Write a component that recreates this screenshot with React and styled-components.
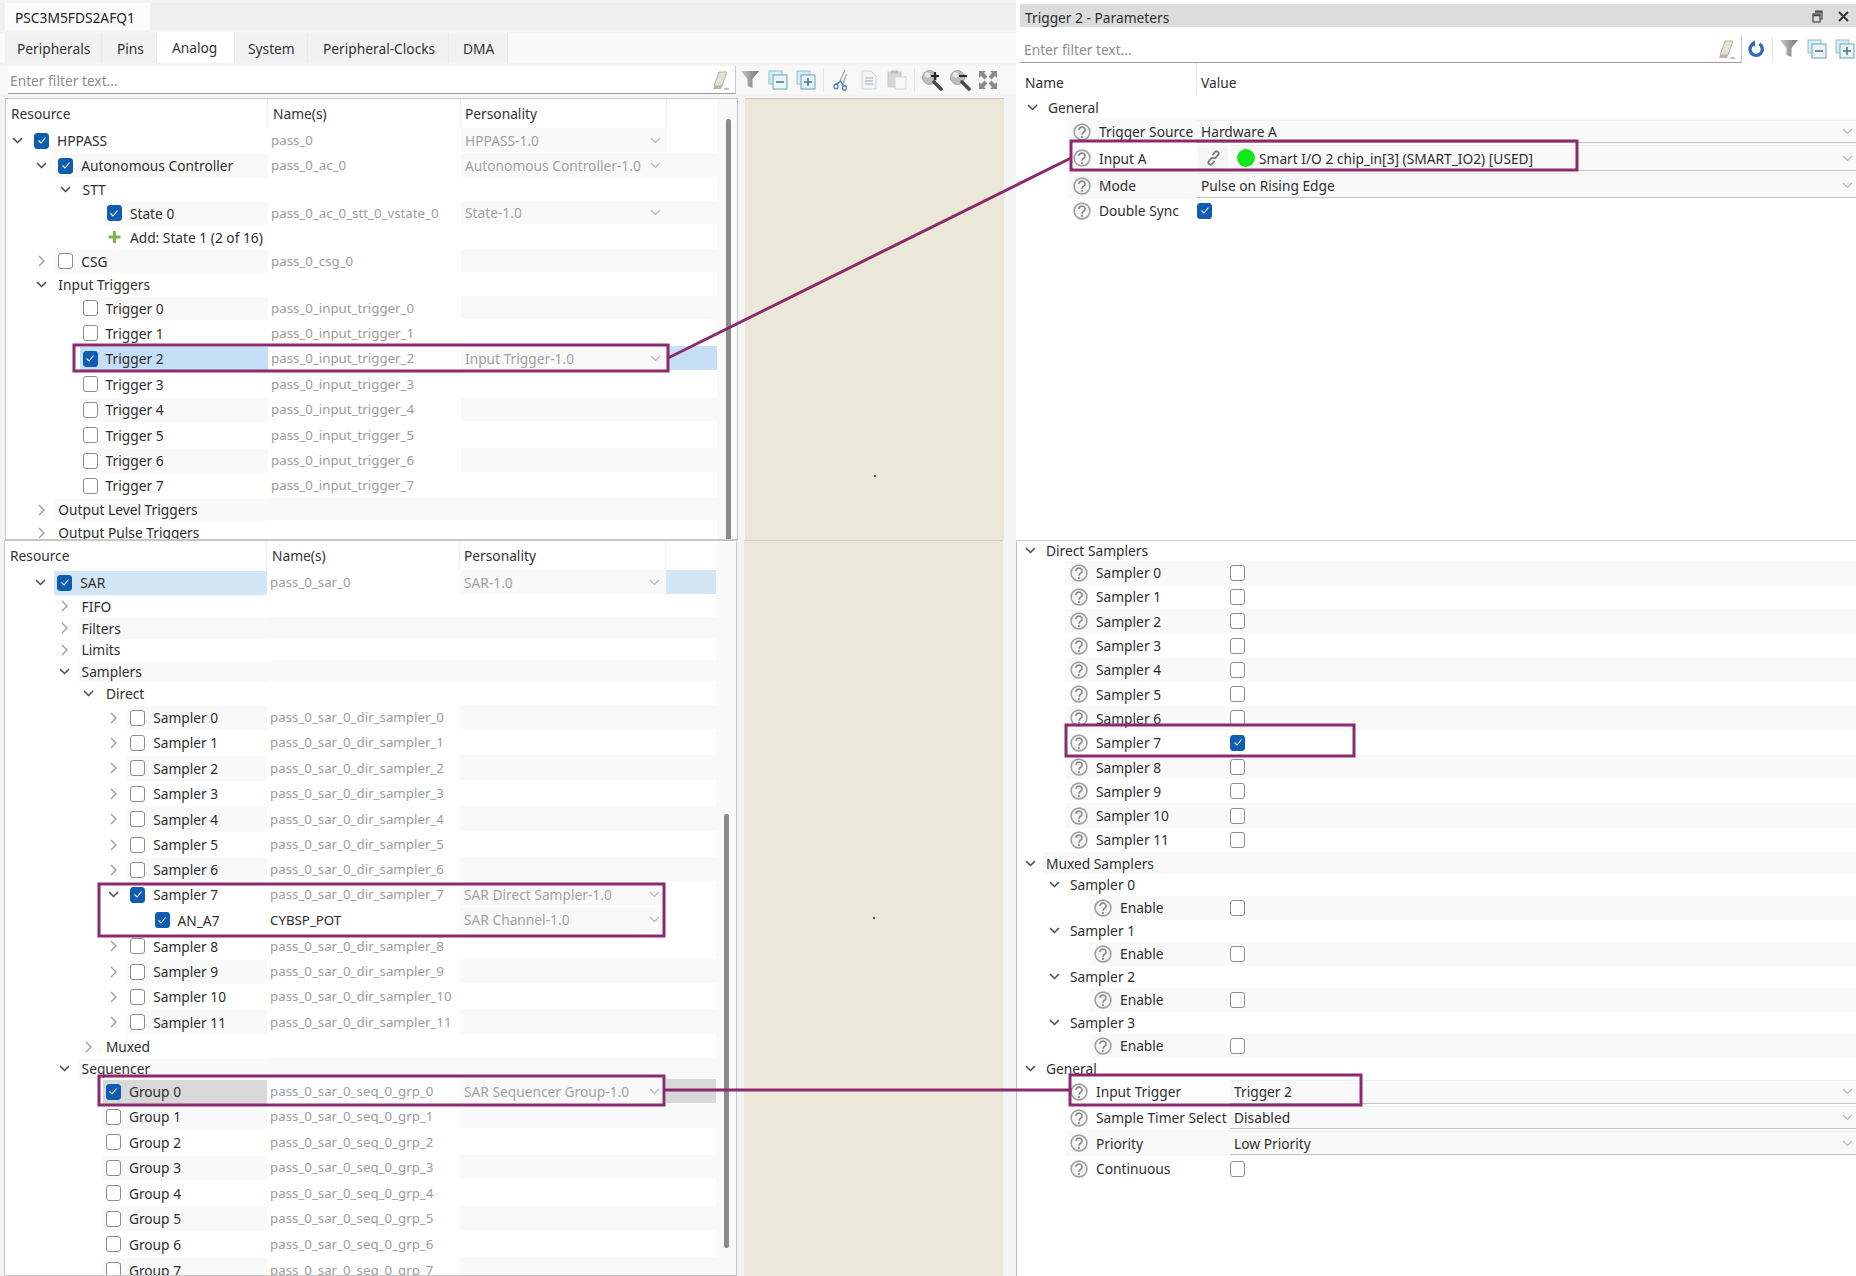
import React from "react";
import styled, { createGlobalStyle } from "styled-components";

const Global = createGlobalStyle`
  html, body { margin: 0; padding: 0; background: #fff; }
  body { font-family: "Noto Sans", "Open Sans", sans-serif; font-size: 13.75px; color: #2e2e2e; }
`;

const Root = styled.div`
  position: relative;
  width: 1856px;
  height: 1276px;
  overflow: hidden;
  display: grid;
  grid-template-columns: 1016px 840px;
  background: #f4f4f4;
`;
const LeftCol = styled.div`
  display: flex;
  flex-direction: column;
  height: 1276px;
  overflow: hidden;
`;
const RightCol = styled.div`
  display: flex;
  flex-direction: column;
  height: 1276px;
  overflow: hidden;
  background: #fff;
`;
const EditorBar = styled.div`
  height: 27px;
  margin-top: 3px;
  background: #efefef;
  display: flex;
  align-items: stretch;
`;
const EditorTab = styled.div`
  width: 145px;
  margin-left: 5px;
  padding: 2px 0 0 10px;
  box-sizing: border-box;
  background: #fbfbfb;
  display: flex;
  align-items: center;
  color: #222;
`;
const TabRow = styled.div`
  height: 30px;
  margin-top: 3px;
  padding-left: 5px;
  display: flex;
  background: #fafafa;
`;
const Tab = styled.div`
  width: ${(p) => p.$w}px;
  box-sizing: border-box;
  padding-left: ${(p) => p.$pad}px;
  display: flex;
  align-items: center;
  background: ${(p) => (p.$active ? "#ffffff" : "#f2f2f2")};
  border-right: 1px solid #eaeaea;
  color: #333;
  margin-top: ${(p) => (p.$active ? "-1px" : "0")};
`;
const Toolbar = styled.div`
  height: 28px;
  margin-top: 3px;
  display: flex;
  align-items: center;
  background: #f8f8f8;
`;
const FilterBox = styled.div`
  box-sizing: border-box;
  width: ${(p) => p.$w}px;
  margin-left: ${(p) => p.$ml}px;
  flex: none;
  height: 28px;
  background: #fff;
  border-bottom: 1px solid #9a9a9a;
  border-right: 1px solid #c8c8c8;
  padding: 2px 5px 0 ${(p) => p.$pad}px;
  display: flex;
  align-items: center;
  justify-content: space-between;
  color: #8c8c8c;
`;
const IconSlot = styled.div`
  width: 28px;
  height: 24px;
  flex: none;
  display: flex;
  align-items: center;
  justify-content: center;
`;
const Sep = styled.div`
  width: 1px;
  height: 24px;
  margin: 0 ${(p) => p.$m}px;
  background: #e4e4e4;
  flex: none;
`;
const Split = styled.div`
  display: grid;
  grid-template-columns: ${(p) => p.$left}px 259px;
  column-gap: ${(p) => p.$gap}px;
  height: ${(p) => p.$h}px;
  margin-left: ${(p) => p.$ml}px;
  margin-top: ${(p) => p.$mt}px;
  overflow: hidden;
`;
const TablePane = styled.div`
  background: #fff;
  border: 1px solid #c6c6c6;
  box-sizing: border-box;
  display: flex;
  overflow: hidden;
`;
const TableBody = styled.div`
  width: 711px;
  flex: none;
`;
const HeaderRow = styled.div`
  display: grid;
  grid-template-columns: 262px 193px 206px 50px;
  height: 29px;
  align-items: center;
  color: #333;
`;
const HeaderCell = styled.div`
  height: 100%;
  display: flex;
  align-items: center;
  padding-left: ${(p) => p.$pad}px;
  box-sizing: border-box;
  border-right: 1px solid #efefef;
`;
const ScrollTrack = styled.div`
  flex: 1;
  background: #f9f9f9;
  padding-left: ${(p) => p.$pad}px;
`;
const ScrollThumb = styled.div`
  width: 5px;
  height: ${(p) => p.$h}px;
  margin-top: ${(p) => p.$top}px;
  background: #8b8b8b;
  border-radius: 2px;
`;
const Row = styled.div`
  display: grid;
  grid-template-columns: 262px 193px 206px 50px;
  height: ${(p) => p.$h}px;
`;
const TreeCell = styled.div`
  display: flex;
  align-items: center;
  padding-left: ${(p) => 3 + p.$level * 24.3}px;
  height: 100%;
  min-width: 0;
  white-space: nowrap;
`;
const Twisty = styled.div`
  width: 16px;
  height: 100%;
  flex: none;
  margin-right: 6px;
  display: flex;
  align-items: center;
  justify-content: center;
`;
const LabelBand = styled.div`
  flex: 1;
  height: calc(100% - 1px);
  display: flex;
  align-items: center;
  gap: 8px;
  padding-left: 3px;
  min-width: 0;
  background: ${(p) => p.$bg};
  color: #2e2e2e;
`;
const NameCell = styled.div`
  display: flex;
  align-items: center;
  height: calc(100% - 1px);
  padding-left: 3px;
  white-space: nowrap;
  font-size: 13.3px;
  background: ${(p) => p.$bg};
  color: ${(p) => (p.$strong ? "#2a2a2a" : "#9c9c9c")};
`;
const PersCell = styled.div`
  display: flex;
  align-items: center;
  justify-content: space-between;
  height: calc(100% - 1px);
  padding: 0 6px 0 4px;
  box-sizing: border-box;
  white-space: nowrap;
  color: #a2a2a2;
  background: ${(p) => p.$bg};
`;
const EndCell = styled.div`
  height: calc(100% - 1px);
  background: ${(p) => p.$bg};
`;
const Check = styled.span`
  width: 15px;
  height: 16px;
  flex: none;
  box-sizing: border-box;
  border-radius: 3px;
  display: inline-flex;
  align-items: center;
  justify-content: center;
  border: 1px solid ${(p) => (p.$on ? "#0f5db0" : "#8d8d8d")};
  background: ${(p) => (p.$on ? "#0f5db0" : "#fff")};
`;
const Canvas = styled.div`
  position: relative;
  background: #ece8d9;
  border-top: 1px solid #c8c8c8;
  box-sizing: border-box;
`;
const CanvasDot = styled.span`
  position: absolute;
  left: 129px;
  top: 376px;
  width: 2px;
  height: 2px;
  background: #555;
`;
const Title = styled.div`
  height: 23px;
  margin: 4px 0 0 4px;
  padding: 4px 7px 0 5px;
  box-sizing: border-box;
  background: #dcdcdc;
  display: flex;
  align-items: center;
  justify-content: space-between;
  color: #2e2e2e;
`;
const TitleIcons = styled.div`
  display: flex;
  align-items: center;
  gap: 15px;
  margin-top: -3px;
`;
const RightToolbar = styled.div`
  height: 28px;
  margin: 8px 0 0 4px;
  display: flex;
  align-items: center;
  overflow: hidden;
`;
const RightTop = styled.div`
  height: 477px;
  flex: none;
  padding-left: 4px;
  box-sizing: border-box;
`;
const ParamHeader = styled.div`
  display: grid;
  grid-template-columns: 177px 1fr;
  height: 32px;
  align-items: center;
`;
const ParamHeadCell = styled.div`
  height: 100%;
  display: flex;
  align-items: center;
  padding: 6px 0 0 ${(p) => p.$pad}px;
  box-sizing: border-box;
  border-right: ${(p) => (p.$sep ? "1px solid #eeeeee" : "none")};
`;
const RightBottom = styled.div`
  flex: 1;
  border-left: 1px solid #bfbfbf;
  border-top: 1px solid #d0d0d0;
  overflow: hidden;
  background: #fff;
`;
const SectionRow = styled.div`
  height: ${(p) => p.$h}px;
  display: flex;
  align-items: center;
  padding-left: ${(p) => p.$pad}px;
`;
const SectionBand = styled.div`
  flex: 1;
  height: 100%;
  display: flex;
  align-items: center;
  padding-left: 2px;
  background: ${(p) => (p.$striped ? "#f9f9f9" : "transparent")};
`;
const ParamRow = styled.div`
  display: grid;
  grid-template-columns: ${(p) => p.$nameW}px 1fr;
  height: ${(p) => p.$h}px;
`;
const ParamName = styled.div`
  display: flex;
  align-items: center;
  height: 100%;
  padding-left: ${(p) => p.$pad}px;
  box-sizing: border-box;
  white-space: nowrap;
`;
const ParamBand = styled.div`
  flex: 1;
  display: flex;
  align-items: center;
  gap: 8px;
  height: 100%;
  padding-left: 6px;
  margin-left: -6px;
  background: ${(p) => (p.$striped ? "#f9f9f9" : "transparent")};
`;
const ParamValue = styled.div`
  display: flex;
  align-items: center;
  height: 100%;
  min-width: 0;
  background: ${(p) => (p.$striped ? "#f9f9f9" : "transparent")};
`;
const Dropdown = styled.div`
  flex: 1;
  height: calc(100% - 2px);
  display: flex;
  align-items: center;
  gap: 4px;
  padding: 0 3px 0 4px;
  box-sizing: border-box;
  background: #f9f9f9;
  border-top: 1px solid #efefef;
  border-bottom: 1px solid #c4c4c4;
  color: #2e2e2e;
  white-space: nowrap;
`;
const Grow = styled.span`
  flex: 1;
`;
const LinkButton = styled.div`
  width: 30px;
  height: calc(100% - 2px);
  margin: 0 3px 0 1px;
  display: flex;
  align-items: center;
  justify-content: center;
  background: #f6f6f6;
`;
const GreenDot = styled.span`
  width: 18px;
  height: 18px;
  margin-left: 2px;
  border-radius: 50%;
  background: #10e81a;
  flex: none;
`;
const Overlay = styled.svg`
  position: absolute;
  left: 0;
  top: 0;
  pointer-events: none;
`;

const Down = ({ c = "#4a4a4a" }) => (
  <svg width="11" height="7" viewBox="0 0 11 7"><polyline points="1,1 5.5,5.5 10,1" fill="none" stroke={c} strokeWidth="1.5" /></svg>
);
const Right = () => (
  <svg width="7" height="12" viewBox="0 0 7 12"><polyline points="1,1 6,6 1,11" fill="none" stroke="#9a9a9a" strokeWidth="1.3" /></svg>
);
const SmallChevron = () => (
  <svg width="11" height="7" viewBox="0 0 11 7"><polyline points="1,1 5.5,5.5 10,1" fill="none" stroke="#b8b8b8" strokeWidth="1.1" /></svg>
);
const CheckBox = ({ on }) => (
  <Check $on={on}>
    {on && <svg width="10" height="9" viewBox="0 0 10 9"><polyline points="1.5,4.5 4,7 8.5,1.5" fill="none" stroke="#fff" strokeWidth="1.1" /></svg>}
  </Check>
);
const Plus = () => (
  <svg width="15" height="16" viewBox="0 0 15 16" style={{ flex: "none" }}><path d="M6 2h3v4.5h4.5v3H9V14H6V9.5H1.5v-3H6z" fill="#78b84a" /></svg>
);
const Help = () => (
  <svg width="18" height="18" viewBox="0 0 18 18" style={{ flex: "none", marginLeft: "-1px" }}>
    <circle cx="9" cy="9" r="7.9" fill="#f6f6f6" stroke="#a0a0a0" strokeWidth="1.6" />
    <path d="M5.9 6.9a3.1 2.8 0 1 1 4.9 2.3c-1.1.8-1.8 1.3-1.8 2.6" fill="none" stroke="#808080" strokeWidth="1.5" />
    <circle cx="9" cy="14" r="1.05" fill="#808080" />
  </svg>
);
const Eraser = () => (
  <svg width="18" height="20" viewBox="0 0 18 20">
    <path d="M7 1h8l-5 14H2z" fill="#e6e1d8" stroke="#b7b0a4" />
    <path d="M2 15h8l-1 3H1z" fill="#b9b3a8" />
    <path d="M12 18h5" stroke="#888" />
  </svg>
);
const Funnel = () => (
  <svg width="20" height="22" viewBox="0 0 20 22">
    <defs><linearGradient id="fg" x1="0" x2="1"><stop offset="0" stopColor="#c8c8c8" /><stop offset="1" stopColor="#757575" /></linearGradient></defs>
    <path d="M1 2h18l-6.5 8v9l-5-2v-7z" fill="url(#fg)" />
  </svg>
);
const Stack = ({ plus }) => (
  <svg width="20" height="20" viewBox="0 0 20 20">
    <rect x="1" y="1" width="13" height="13" fill="#d7edf4" stroke="#8fc0d3" />
    <rect x="5" y="5" width="14" height="14" fill="#eaf5f8" stroke="#6ba3b8" />
    <path d={plus ? "M8 12h8M12 8v8" : "M8 12h8"} stroke="#47727f" strokeWidth="1.5" />
  </svg>
);
const Scissors = () => (
  <svg width="16" height="22" viewBox="0 0 16 22">
    <path d="M12 1 6.5 13M13.5 5 9 17" stroke="#a8a8a8" strokeWidth="1.3" fill="none" />
    <path d="M6.5 13 3 15.5" stroke="#5b86b8" strokeWidth="1.6" />
    <ellipse cx="3" cy="17.5" rx="2" ry="2.3" fill="none" stroke="#5b86b8" strokeWidth="1.4" />
    <ellipse cx="11.5" cy="19" rx="1.9" ry="2.2" fill="none" stroke="#5b86b8" strokeWidth="1.4" />
    <path d="M7 11.5 10.7 16.5" stroke="#5b86b8" strokeWidth="1.3" />
  </svg>
);
const CopyIcon = () => (
  <svg width="18" height="20" viewBox="0 0 18 20">
    <path d="M2 1h9l5 5v13H2z" fill="#f4f6f8" stroke="#cdd1d6" />
    <path d="M5 8h8M5 11h8M5 14h8" stroke="#a4adb8" />
  </svg>
);
const PasteIcon = () => (
  <svg width="20" height="20" viewBox="0 0 20 20">
    <rect x="1" y="2" width="13" height="15" fill="#d6d6d6" stroke="#c4c4c4" />
    <rect x="4" y="0.5" width="7" height="3" fill="#bcbcbc" />
    <rect x="8" y="7" width="11" height="12" fill="#f8f8f8" stroke="#d4d4d4" />
  </svg>
);
const Magnifier = ({ sign }) => (
  <svg width="22" height="22" viewBox="0 0 22 22">
    <circle cx="8.5" cy="8.5" r="7" fill="#bdbdbd" stroke="#a6a6a6" />
    <circle cx="6.5" cy="6" r="2.8" fill="#e8e8e8" />
    <path d="M13 13l7 7" stroke="#4a4a4a" strokeWidth="3.6" strokeLinecap="round" />
    <path d={sign === "+" ? "M10 7h8M14 3v8" : "M10 7h8"} stroke="#2a2a2a" strokeWidth="2.2" />
  </svg>
);
const FitIcon = () => (
  <svg width="20" height="20" viewBox="0 0 20 20">
    <path d="M1 1h7L6 3l3.5 3.5-3 3L3 6 1 8zM19 1v7l-2-2-3.5 3.5-3-3L14 3l-2-2zM1 19v-7l2 2 3.5-3.5 3 3L6 17l2 2zM19 19h-7l2-2-3.5-3.5 3-3L17 14l2-2z" fill="#8c8c8c" />
  </svg>
);
const Refresh = () => (
  <svg width="20" height="20" viewBox="0 0 20 20">
    <path d="M7.5 4.6A6.2 6.2 0 1 0 13.4 4.9" fill="none" stroke="#2f6db5" strokeWidth="3.4" />
    <path d="M9 1.2v6.6L4.6 4.5z" fill="#2f6db5" />
  </svg>
);
const RestoreIcon = () => (
  <svg width="11" height="13" viewBox="0 0 11 13">
    <path d="M3 1h7v8H8" fill="none" stroke="#444" strokeWidth="1.2" />
    <rect x="1" y="4" width="7" height="8" fill="none" stroke="#444" strokeWidth="1.2" />
    <path d="M1 5.5h7M3 2h7" stroke="#444" strokeWidth="1.6" />
  </svg>
);
const CloseIcon = () => (
  <svg width="11" height="11" viewBox="0 0 11 11"><path d="M1 1l9 9M10 1l-9 9" stroke="#333" strokeWidth="1.9" /></svg>
);
const LinkIcon = () => (
  <svg width="15" height="16" viewBox="0 0 15 16" fill="none" stroke="#7a7a7a" strokeWidth="1.8">
    <path d="M6.5 5l2.5-3a2.1 2.1 0 0 1 3.2 2.7L10 7.3a2.1 2.1 0 0 1-2.9.3" />
    <path d="M8.5 11 6 14a2.1 2.1 0 0 1-3.2-2.7L5 8.7a2.1 2.1 0 0 1 2.9-.3" />
  </svg>
);

const BLUE = "#c4dff6";
const PALE_BLUE = "#d3e6f6";
const GRAY = "#d8d8d8";
const STRIPE = "#f9f9f9";

const t = (level, label, name, pers, o = {}) => ({ level, label, name, pers, ...o });

const topRows = [
  t(0, "HPPASS", "pass_0", "HPPASS-1.0", { h: 25, tw: "open", cb: 1 }),
  t(1, "Autonomous Controller", "pass_0_ac_0", "Autonomous Controller-1.0", { h: 25, tw: "open", cb: 1, st: 1 }),
  t(2, "STT", "", "", { h: 23, tw: "open" }),
  t(3, "State 0", "pass_0_ac_0_stt_0_vstate_0", "State-1.0", { h: 24, cb: 1, st: 1 }),
  t(3, "Add: State 1 (2 of 16)", "", "", { h: 24, add: 1 }),
  t(1, "CSG", "pass_0_csg_0", "", { h: 24, tw: "closed", cb: 0, st: 1 }),
  t(1, "Input Triggers", "", "", { h: 23, tw: "open" }),
  t(2, "Trigger 0", "pass_0_input_trigger_0", "", { h: 24, cb: 0, st: 1 }),
  t(2, "Trigger 1", "pass_0_input_trigger_1", "", { h: 26, cb: 0 }),
  t(2, "Trigger 2", "pass_0_input_trigger_2", "Input Trigger-1.0", { h: 25, cb: 1, sel: BLUE }),
  t(2, "Trigger 3", "pass_0_input_trigger_3", "", { h: 26, cb: 0 }),
  t(2, "Trigger 4", "pass_0_input_trigger_4", "", { h: 25, cb: 0, st: 1 }),
  t(2, "Trigger 5", "pass_0_input_trigger_5", "", { h: 26, cb: 0 }),
  t(2, "Trigger 6", "pass_0_input_trigger_6", "", { h: 25, cb: 0, st: 1 }),
  t(2, "Trigger 7", "pass_0_input_trigger_7", "", { h: 25, cb: 0 }),
  t(1, "Output Level Triggers", "", "", { h: 23, tw: "closed", st: 1 }),
  t(1, "Output Pulse Triggers", "", "", { h: 23, tw: "closed" }),
];

const dirHeights = [25, 25, 26, 25, 26, 25, 25];
const grpHeights = [25, 26, 25, 26, 25, 26, 26];

const bottomRows = [
  t(1, "SAR", "pass_0_sar_0", "SAR-1.0", { h: 25, tw: "open", cb: 1, sel: PALE_BLUE }),
  t(2, "FIFO", "", "", { h: 22, tw: "closed" }),
  t(2, "Filters", "", "", { h: 22, tw: "closed", st: 1 }),
  t(2, "Limits", "", "", { h: 21, tw: "closed" }),
  t(2, "Samplers", "", "", { h: 22, tw: "open", st: 1 }),
  t(3, "Direct", "", "", { h: 23, tw: "open" }),
  ...dirHeights.map((h, i) =>
    t(4, `Sampler ${i}`, `pass_0_sar_0_dir_sampler_${i}`, "", { h, tw: "closed", cb: 0, st: i % 2 === 0 })
  ),
  t(4, "Sampler 7", "pass_0_sar_0_dir_sampler_7", "SAR Direct Sampler-1.0", { h: 25, tw: "open", cb: 1 }),
  t(5, "AN_A7", "CYBSP_POT", "SAR Channel-1.0", { h: 26, cb: 1, strong: 1 }),
  t(4, "Sampler 8", "pass_0_sar_0_dir_sampler_8", "", { h: 26, tw: "closed", cb: 0 }),
  t(4, "Sampler 9", "pass_0_sar_0_dir_sampler_9", "", { h: 25, tw: "closed", cb: 0, st: 1 }),
  t(4, "Sampler 10", "pass_0_sar_0_dir_sampler_10", "", { h: 25, tw: "closed", cb: 0 }),
  t(4, "Sampler 11", "pass_0_sar_0_dir_sampler_11", "", { h: 26, tw: "closed", cb: 0, st: 1 }),
  t(3, "Muxed", "", "", { h: 23, tw: "closed" }),
  t(2, "Sequencer", "", "", { h: 21, tw: "open", st: 1 }),
  t(3, "Group 0", "pass_0_sar_0_seq_0_grp_0", "SAR Sequencer Group-1.0", { h: 25, cb: 1, sel: GRAY }),
  ...grpHeights.map((h, i) =>
    t(3, `Group ${i + 1}`, `pass_0_sar_0_seq_0_grp_${i + 1}`, "", { h, cb: 0, st: i % 2 === 0 })
  ),
];

const TreeTableRow = ({ r }) => {
  const band = r.sel || (r.st ? STRIPE : "transparent");
  const endBg = r.sel || (r.st ? STRIPE : "transparent");
  const persBg = r.pers ? "#f9f9f9" : r.st ? STRIPE : "transparent";
  const nameBg = !r.name && r.st ? STRIPE : "transparent";
  return (
    <Row $h={r.h}>
      <TreeCell $level={r.level}>
        <Twisty>
          {r.tw === "open" && <Down />}
          {r.tw === "closed" && <Right />}
        </Twisty>
        <LabelBand $bg={band}>
          {r.cb !== undefined && <CheckBox on={!!r.cb} />}
          {r.add && <Plus />}
          <span>{r.label}</span>
        </LabelBand>
      </TreeCell>
      <NameCell $strong={r.strong} $bg={nameBg}>{r.name}</NameCell>
      <PersCell $bg={persBg}>
        <span>{r.pers}</span>
        {r.pers && <SmallChevron />}
      </PersCell>
      <EndCell $bg={endBg} />
    </Row>
  );
};

const TableHead = () => (
  <HeaderRow>
    <HeaderCell $pad={5}>Resource</HeaderCell>
    <HeaderCell $pad={5}>Name(s)</HeaderCell>
    <HeaderCell $pad={4}>Personality</HeaderCell>
    <div />
  </HeaderRow>
);

const Section = ({ h, pad, label, striped }) => (
  <SectionRow $h={h} $pad={pad}>
    <Twisty><Down /></Twisty>
    <SectionBand $striped={striped}>{label}</SectionBand>
  </SectionRow>
);

const Param = ({ h, nameW, pad, label, striped, children }) => (
  <ParamRow $h={h} $nameW={nameW}>
    <ParamName $pad={pad}>
      <ParamBand $striped={striped}>
        <Help />
        <span>{label}</span>
      </ParamBand>
    </ParamName>
    <ParamValue $striped={striped}>{children}</ParamValue>
  </ParamRow>
);

const Select = ({ children }) => (
  <Dropdown>
    {children}
    <Grow />
    <SmallChevron />
  </Dropdown>
);

const samplers = Array.from({ length: 12 }, (_, i) => i);

export default function App() {
  return (
    <Root>
      <Global />
      <LeftCol>
        <EditorBar>
          <EditorTab>PSC3M5FDS2AFQ1</EditorTab>
        </EditorBar>
        <TabRow>
          <Tab $w={97} $pad={12}>Peripherals</Tab>
          <Tab $w={55} $pad={15}>Pins</Tab>
          <Tab $w={78} $pad={15} $active>Analog</Tab>
          <Tab $w={73} $pad={13}>System</Tab>
          <Tab $w={141} $pad={15}>Peripheral-Clocks</Tab>
          <Tab $w={59} $pad={14}>DMA</Tab>
        </TabRow>
        <Toolbar>
          <FilterBox $w={728} $ml={8} $pad={2}>
            <span>Enter filter text...</span>
            <Eraser />
          </FilterBox>
          <IconSlot><Funnel /></IconSlot>
          <IconSlot><Stack /></IconSlot>
          <IconSlot><Stack plus /></IconSlot>
          <Sep $m={3} />
          <IconSlot><Scissors /></IconSlot>
          <IconSlot><CopyIcon /></IconSlot>
          <IconSlot><PasteIcon /></IconSlot>
          <Sep $m={3} />
          <IconSlot><Magnifier sign="+" /></IconSlot>
          <IconSlot><Magnifier sign="-" /></IconSlot>
          <IconSlot><FitIcon /></IconSlot>
        </Toolbar>
        <Split $left={733} $gap={7} $h={442} $ml={5} $mt={4}>
          <TablePane>
            <TableBody>
              <TableHead />
              {topRows.map((r) => <TreeTableRow key={r.label} r={r} />)}
            </TableBody>
            <ScrollTrack $pad={9}><ScrollThumb $h={430} $top={20} /></ScrollTrack>
          </TablePane>
          <Canvas><CanvasDot /></Canvas>
        </Split>
        <Split $left={733} $gap={7} $h={736} $ml={4} $mt={0}>
          <TablePane>
            <TableBody>
              <TableHead />
              {bottomRows.map((r) => <TreeTableRow key={r.label + r.level} r={r} />)}
            </TableBody>
            <ScrollTrack $pad={8}><ScrollThumb $h={434} $top={273} /></ScrollTrack>
          </TablePane>
          <Canvas><CanvasDot /></Canvas>
        </Split>
      </LeftCol>
      <RightCol>
        <Title>
          <span>Trigger 2 - Parameters</span>
          <TitleIcons><RestoreIcon /><CloseIcon /></TitleIcons>
        </Title>
        <RightToolbar>
          <FilterBox $w={722} $ml={0} $pad={4}>
            <span>Enter filter text...</span>
            <Eraser />
          </FilterBox>
          <IconSlot><Refresh /></IconSlot>
          <Sep $m={2} />
          <IconSlot><Funnel /></IconSlot>
          <IconSlot><Stack /></IconSlot>
          <IconSlot><Stack plus /></IconSlot>
        </RightToolbar>
        <RightTop>
          <ParamHeader>
            <ParamHeadCell $pad={5} $sep>Name</ParamHeadCell>
            <ParamHeadCell $pad={4}>Value</ParamHeadCell>
          </ParamHeader>
          <Section h={24} pad={4} label="General" />
          <Param h={25} nameW={177} pad={54} label="Trigger Source" striped>
            <Select>Hardware A</Select>
          </Param>
          <Param h={28} nameW={177} pad={54} label="Input A">
            <LinkButton><LinkIcon /></LinkButton>
            <Select><GreenDot />Smart I/O 2 chip_in[3] (SMART_IO2) [USED]</Select>
          </Param>
          <Param h={27} nameW={177} pad={54} label="Mode" striped>
            <Select>Pulse on Rising Edge</Select>
          </Param>
          <Param h={23} nameW={177} pad={54} label="Double Sync"><CheckBox on /></Param>
        </RightTop>
        <RightBottom>
          <Section h={19.5} pad={5} label="Direct Samplers" />
          {samplers.map((i) => (
            <Param key={i} h={24.3} nameW={213} pad={54} label={`Sampler ${i}`} striped={i % 2 === 0}>
              <CheckBox on={i === 7} />
            </Param>
          ))}
          <Section h={21.9} pad={5} label="Muxed Samplers" striped />
          {[0, 1, 2, 3].map((i) => (
            <React.Fragment key={i}>
              <Section h={22} pad={29} label={`Sampler ${i}`} />
              <Param h={24} nameW={213} pad={78} label="Enable" striped><CheckBox on={false} /></Param>
            </React.Fragment>
          ))}
          <Section h={21} pad={5} label="General" />
          <Param h={26} nameW={213} pad={54} label="Input Trigger"><Select>Trigger 2</Select></Param>
          <Param h={25.5} nameW={213} pad={54} label="Sample Timer Select"><Select>Disabled</Select></Param>
          <Param h={25.5} nameW={213} pad={54} label="Priority" striped><Select>Low Priority</Select></Param>
          <Param h={26} nameW={213} pad={54} label="Continuous"><CheckBox on={false} /></Param>
        </RightBottom>
      </RightCol>
      <Overlay width="1856" height="1276" viewBox="0 0 1856 1276">
        <g fill="none" stroke="#8c2a6f" strokeWidth="3">
          <rect x="74" y="345" width="594" height="26" />
          <rect x="99" y="884" width="565" height="52" />
          <rect x="99" y="1076" width="565" height="29" />
          <rect x="1071" y="141" width="506" height="29" />
          <rect x="1066" y="725" width="288" height="31" />
          <rect x="1070" y="1075" width="291" height="30" />
          <path d="M668 358 1071 158" />
          <path d="M664 1090H1070" />
        </g>
      </Overlay>
    </Root>
  );
}
